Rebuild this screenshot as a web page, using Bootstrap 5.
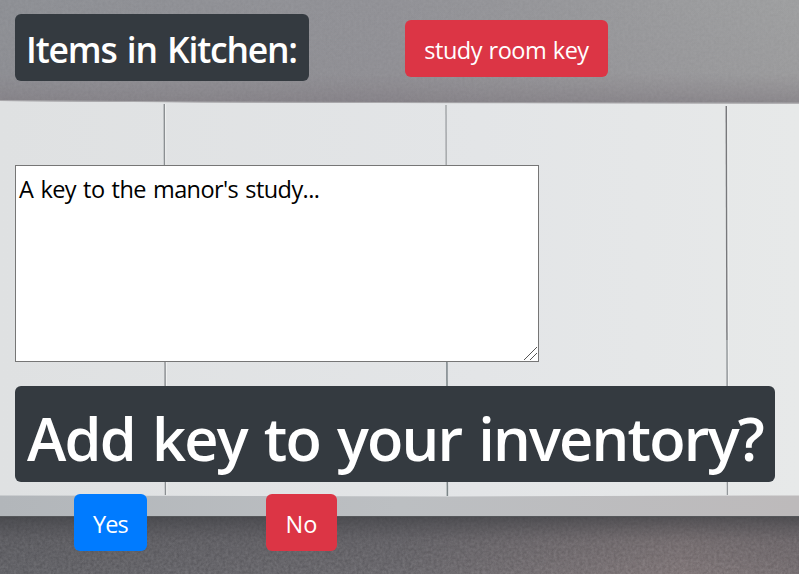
<!DOCTYPE html>
<html lang="en">
<head>
<meta charset="utf-8">
<meta name="viewport" content="width=device-width, initial-scale=1">
<title>Kitchen</title>
<link href="https://cdn.jsdelivr.net/npm/bootstrap@5.3.0/dist/css/bootstrap.min.css" rel="stylesheet">
<style>
body{font-family:"Segoe UI","Open Sans","Noto Sans",sans-serif;font-size:24px;background:#e2e4e6}
.room{height:574px;padding:14px 15px 0;isolation:isolate}
.scene{z-index:-1}
.label-dark{background:#343a40;border-radius:6px;padding:0 12px;font-weight:600;white-space:nowrap;color:#fff}
.room-label{width:294px;height:67px;padding-left:11px;font-size:35.5px;line-height:70px;letter-spacing:-1.2px;word-spacing:2.2px}
.ask-label{width:760px;height:96px;padding-left:12px;font-size:59.5px;line-height:104px;letter-spacing:-1.8px;word-spacing:3.3px}
.btn-game{height:57px;border:0;border-radius:6px;padding:0;font-size:23.5px;line-height:61px;color:#fff!important;white-space:nowrap}
.btn-item{width:203px;margin:6px 0 0 96px;letter-spacing:-.5px;word-spacing:1px}
.btn-yes{width:73px;--bs-btn-bg:#007bff;letter-spacing:-.9px}
.btn-no{width:71px;margin-left:119px}
.description-box{width:524px;margin-top:84px}
.description{width:524px;height:197px;padding:5px 3px;border:1px solid #767676;color:#000;background:#fff;font-size:23.5px;line-height:36px;letter-spacing:-.58px;word-spacing:1.6px;resize:none}
.grip{right:2px;bottom:2px;pointer-events:none}
.ask-row{margin-top:24px}
.answers{padding:12px 0 0 59px}
</style>
</head>
<body>
<main class="room position-relative overflow-hidden">
<svg class="scene position-absolute top-0 start-0 w-100 h-100" viewBox="0 0 799 574" preserveAspectRatio="none" aria-hidden="true">
<defs>
<linearGradient id="wall"><stop stop-color="#8f9196"/><stop offset=".5" stop-color="#939398"/><stop offset="1" stop-color="#a0a1a2"/></linearGradient>
<linearGradient id="wallShade" x2="0" y2="1"><stop stop-color="#888187" stop-opacity="0"/><stop offset=".7" stop-color="#888187" stop-opacity=".12"/><stop offset="1" stop-color="#817c82" stop-opacity=".7"/></linearGradient>
<linearGradient id="doors"><stop stop-color="#dfe1e2"/><stop offset=".6" stop-color="#e3e5e7"/><stop offset="1" stop-color="#e7e9e9"/></linearGradient>
<linearGradient id="ledge"><stop stop-color="#b2b6ba"/><stop offset=".5" stop-color="#bcbfc2"/><stop offset="1" stop-color="#bdbabb"/></linearGradient>
<linearGradient id="splash"><stop stop-color="#626267"/><stop offset=".5" stop-color="#6a686d"/><stop offset=".85" stop-color="#817779"/><stop offset="1" stop-color="#776f72"/></linearGradient>
<linearGradient id="splashShade" x2="0" y2="1"><stop stop-color="#3f4044" stop-opacity=".75"/><stop offset=".45" stop-color="#4c4b50" stop-opacity=".2"/><stop offset="1" stop-color="#4c4b50" stop-opacity="0"/></linearGradient>
<filter id="grain" x="0" y="0" width="1" height="1" color-interpolation-filters="sRGB"><feTurbulence type="fractalNoise" baseFrequency=".35" numOctaves="3" seed="4"/><feColorMatrix values="1.6 0 0 0 -.3  1.6 0 0 0 -.3  1.6 0 0 0 -.3  0 0 0 0 1"/></filter>
</defs>
<path fill="url(#wall)" d="M0 0h799v104H0z"/>
<path fill="url(#wallShade)" d="M0 0h799v104H0z"/>
<path filter="url(#grain)" opacity=".02" d="M0 0h799v104H0z"/>
<path fill="url(#doors)" d="M0 101L200 102.300 450 103 799 103.500V497H0z"/>
<path d="M0 100.500L200 102 450 102.700 799 103" fill="none" stroke="#aaa9ac"/>
<g fill="none" stroke-width="1.500">
<path stroke="#8b8f92" d="M164.300 104L165.500 495"/>
<path stroke="#f0f1f1" stroke-width="1" d="M165.600 104L166.800 495"/>
<path stroke="#a5a8ab" d="M446 105L446.500 250"/><path stroke="#7c8588" d="M446.500 250L447.400 496"/>
<path stroke="#77787b" d="M726.300 106L727 340"/><path stroke="#94989b" d="M727 340L727.500 495"/>
<path stroke="#f0f1f1" stroke-width="1" d="M727.800 106L728.800 495"/>
</g>
<path fill="url(#ledge)" d="M0 495.500L450 496.500 799 495.500V516H0z"/>
<path fill="url(#splash)" d="M0 516.500H799V574H0z"/>
<path filter="url(#grain)" opacity=".08" d="M0 517h799v57H0z"/>
<path fill="url(#splashShade)" d="M0 516H799V574H0z"/>
<path stroke="#55575a" d="M0 516.500H799"/>
</svg>
<div class="d-flex align-items-start">
<h2 class="label-dark room-label mb-0">Items in Kitchen:</h2>
<button type="button" class="btn btn-danger btn-game btn-item">study room key</button>
</div>
<div class="description-box position-relative">
<textarea class="description d-block" spellcheck="false" aria-label="Item description">A key to the manor's study...</textarea>
<svg class="grip position-absolute" width="13" height="13" viewBox="0 0 13 13" fill="none" stroke="#555" aria-hidden="true"><path d="M0 13L13 0M6 13L13 6"/></svg>
</div>
<div class="ask-row"><h1 class="label-dark ask-label mb-0">Add key to your inventory?</h1></div>
<div class="answers d-flex">
<button type="button" class="btn btn-primary btn-game btn-yes">Yes</button>
<button type="button" class="btn btn-danger btn-game btn-no">No</button>
</div>
</main>
<script src="https://cdn.jsdelivr.net/npm/bootstrap@5.3.0/dist/js/bootstrap.bundle.min.js"></script>
</body>
</html>
